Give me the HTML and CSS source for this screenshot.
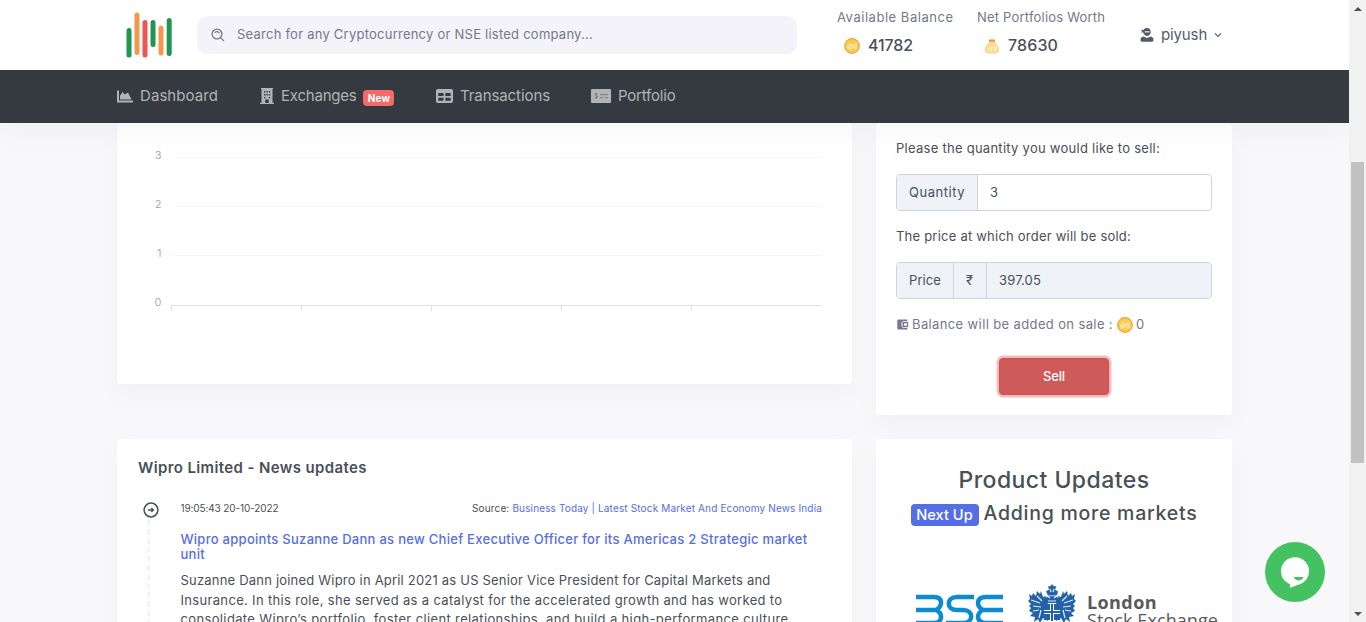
FILE: index.html
```html
<!DOCTYPE html>
<html lang="en">
<head>
<meta charset="utf-8">
<title>Wipro Limited</title>
<link rel="stylesheet" href="styles.css">
</head>
<body>
<svg class="defs" width="0" height="0">
  <symbol id="coin" viewBox="0 0 16 16">
    <circle cx="8" cy="8" r="7.4" fill="#f6cb51" stroke="#f0a63f" stroke-width="1.1"/>
    <path d="M3.9 7.5v3.7M5.5 5v6M7.1 6v5.3M8.9 6v3.6M10.6 6.6v4.4M12.2 5.4v5.6" stroke="#f8e6ae" stroke-width="1.2" stroke-linecap="round"/>
  </symbol>
</svg>
<div class="app">
  <div class="page">
    <header class="topbar">
      <div class="container topbar-row">
        <svg class="logo" viewBox="0 0 46 46" stroke-width="5" stroke-linecap="round">
          <path d="M3 18.5v24.5M43.2 8.500v33M27 10.5v22" stroke="#219653"/>
          <path d="M11 3v37.5M35 16v25" stroke="#f2994a"/>
          <path d="M19 10.5v32.5" stroke="#eb5757"/>
        </svg>
        <div class="search">
          <svg width="14" height="14" viewBox="0 0 14 14" fill="none" stroke="#74788d" stroke-width="1.3" stroke-linecap="round"><circle cx="6" cy="6" r="4.9"/><path d="M9.6 9.6l3 3M4.200 4.300a2.600 2.600 0 0 1 3.800.500"/></svg>
          <span class="t-search">Search for any Cryptocurrency or NSE listed company...</span>
        </div>
        <div class="stat stat-a">
          <span class="stat-label t-ab">Available Balance</span>
          <span class="stat-value"><svg width="16" height="16"><use href="#coin"/></svg><span class="t-v1">41782</span></span>
        </div>
        <div class="stat stat-b">
          <span class="stat-label t-np">Net Portfolios Worth</span>
          <span class="stat-value"><svg width="16" height="16" viewBox="0 0 16 16"><path d="M5.5 3.5h5c1 2 5 5 4.7 8.3-.2 2.5-1.7 3.7-3.7 3.7h-7c-2 0-3.5-1.2-3.7-3.700C.5 8.5 4.5 5.5 5.5 3.5z" fill="#fdd888"/><path d="M5 .7h6l-.8 1.800H5.800z" fill="#fbcf75"/><path d="M5 2.900h6" stroke="#c87137" stroke-width="1.2"/><path d="M4 9.500v4M5.700 7.500v6M7.400 8.500v5M9.200 7.500v4M10.800 8.800v4.500M12.300 8v5.500" stroke="#fdf0cf" stroke-width="1.1"/></svg><span class="t-v2">78630</span></span>
        </div>
        <div class="user">
          <svg width="14" height="14" viewBox="0 0 14 14" fill="#505d69"><path d="M3.400 2.100C4.200.6 5.500 0 7 0c2.200 0 3.700 1.600 3.700 3.900 0 2.300-1.600 4-3.700 4S3.400 6.200 3.200 4.300L1.200 4.700 2.100 3.200.9 1.700z"/><path d="M4.800 3.300h4.700v1.100H4.800z" fill="#fff"/><path d="M3.300 8.500L7 9.900l3.700-1.400c2 .4 2.800 1.800 2.800 3.600 0 1-.5 1.600-1.500 1.600H2c-1 0-1.500-.6-1.500-1.600 0-1.800.8-3.200 2.800-3.600z"/></svg>
          <span class="t-user">piyush</span>
          <svg class="chev" width="8" height="6" viewBox="0 0 8 6" fill="none" stroke="#555b6d" stroke-width="1.2"><path d="M1 1.300l3 3 3-3"/></svg>
        </div>
      </div>
    </header>
    <nav class="menu">
      <div class="container menu-row">
        <a class="menu-item m1"><svg width="16" height="13" viewBox="0 0 16 13" fill="#b0b3b7"><path d="M0 .5h2v10h14v2H0z"/><path d="M3 9.500V5.800L5.500 2l2.300 2.600L11 2.500 14.500 9.500z"/></svg><span class="t-m1">Dashboard</span></a>
        <a class="menu-item m2"><svg width="14" height="16" viewBox="0 0 14 16"><path d="M1 0h12v1h-.5v13.800H14V16H0v-1.200h1.500V1H1z" fill="#b0b3b7"/><path d="M4 3h1.400v1.400H4zm2.400 0h1.400v1.400H6.400zm2.400 0h1.400v1.400H8.800zM4 6h1.400v1.400H4zm2.400 0h1.400v1.400H6.400zm2.400 0h1.400v1.400H8.800zM4 9h1.400v1.200H4zm4.800 0h1.400v1.200H8.800zM5.300 15v-3.500h3.400V15z" fill="#343a40"/></svg><span class="t-m2">Exchanges</span><span class="badge-new"><span class="t-new">New</span></span></a>
        <a class="menu-item m3"><svg width="17" height="14" viewBox="0 0 17 14"><rect width="17" height="14" rx="2" fill="#b0b3b7"/><path d="M2.200 4h5.300v3H2.200zm7.200 0h5.300v3H9.400zM2.200 8.800h5.300v3H2.200zm7.200 0h5.300v3H9.400z" fill="#343a40"/></svg><span class="t-m3">Transactions</span></a>
        <a class="menu-item m4"><svg width="20" height="14" viewBox="0 0 20 14"><rect width="20" height="14" rx="1" fill="#b0b3b7"/><path d="M9 5.600h8M9 8.600h3M13.500 8.600H17M6.600 5.300c-.7-.9-2.600-.7-2.600.4 0 1.300 2.600.8 2.600 2.100 0 1.200-2 1.300-2.700.3M5.300 3.800v6" stroke="#74787d" stroke-width=".9" fill="none"/></svg><span class="t-m4">Portfolio</span></a>
      </div>
    </nav>
    <main class="content">
      <div class="container cards">
        <section class="card chart-card">
          <svg class="chart" width="735" height="261" viewBox="0 0 735 261">
            <path d="M54 34.500H705M54 83.500H705M54 132.500H705" stroke="#f7f7f7"/>
            <path d="M54 182.500H705M54.500 182v6M184.500 182v6M314.500 182v6M444.500 182v6M574.500 182v6" stroke="#e0e0e0" fill="none"/>
            <g class="axis"><text x="44.500" y="36">3</text><text x="44.500" y="85">2</text><text x="44.500" y="134">1</text><text x="44.500" y="183">0</text></g>
          </svg>
        </section>
        <section class="card sell-card">
          <p class="hint"><span class="t-q">Please the quantity you would like to sell:</span></p>
          <div class="group"><span class="addon a1"><span class="t-qty">Quantity</span></span><span class="field">3</span></div>
          <p class="hint"><span class="t-p">The price at which order will be sold:</span></p>
          <div class="group"><span class="addon a2"><span class="t-price">Price</span></span><span class="addon a3">₹</span><span class="field ro"><span class="t-pv">397.05</span></span></div>
          <p class="sale"><svg width="12" height="11" viewBox="0 0 12 11"><path d="M1.500.5h8.800v1.700H6.500q-2 0-2 2v2.600q0 2 2 2h3.800v1.700H1.500Q.3 10.500.3 9.300V1.700Q.3.5 1.500.5z" fill="#74788d"/><path d="M5.500 3h5.600v5H5.500z" fill="#74788d"/><path d="M7 4.300h3v2.400H7z" fill="#fff"/></svg><span class="t-sale">Balance will be added on sale :</span><svg width="16" height="16"><use href="#coin"/></svg><span>0</span></p>
          <button class="sell"><span class="t-sell">Sell</span></button>
        </section>
        <section class="card news-card">
          <h4 class="news-head"><span class="t-nh">Wipro Limited - News updates</span></h4>
          <div class="news-item">
            <div class="rail"><svg width="16" height="16" viewBox="0 0 16 16" fill="none" stroke="#495057" stroke-width="1.5"><circle cx="8" cy="8" r="6.9"/><path d="M5 8h5M8.300 6l2 2-2 2"/></svg><span class="dash"></span></div>
            <div class="news-body">
              <div class="meta"><span class="t-date">19:05:43 20-10-2022</span><span class="t-src">Source: <a>Business Today | Latest Stock Market And Economy News India</a></span></div>
              <h5 class="title"><span class="t-t1">Wipro appoints Suzanne Dann as new Chief Executive Officer for its Americas 2 Strategic market</span><br><span class="t-t2">unit</span></h5>
              <p class="copy"><span class="t-c1">Suzanne Dann joined Wipro in April 2021 as US Senior Vice President for Capital Markets and</span><br><span class="t-c2">Insurance. In this role, she served as a catalyst for the accelerated growth and has worked to</span><br><span class="t-c3">consolidate Wipro’s portfolio, foster client relationships, and build a high-performance culture</span></p>
            </div>
          </div>
        </section>
        <section class="card updates-card">
          <h3 class="pu"><span class="t-pu">Product Updates</span></h3>
          <h4 class="next"><span class="badge-next"><span class="t-next">Next Up</span></span><span class="t-add">Adding more markets</span></h4>
          <div class="markets">
            <svg width="88" height="38" viewBox="0 0 88 38" fill="none" stroke="#0a8bd2" stroke-width="4.500">
              <path d="M0 3H18C27 3 27 12 20 16 27 19 27 29 18 29H0M0 16H20"/>
              <path d="M58 3H41C30 3 30 16 41 16H47C58 16 58 29 47 29H30"/>
              <path d="M87 3H70C60 3 60 12 67 16 60 19 60 29 70 29H87M67 16H87"/>
            </svg>
            <svg width="48" height="48" viewBox="0 0 48 48" fill="#2462a8">
              <path d="M24 0l1.500 2 3 .5-1.500 3 3 2-1 4h-9l-2-4 3-2-1-3 2.500-.5z"/>
              <path d="M1 10l3 2 1-3 3 3 1-5 3 3 1-3 2 6 3-1-1 5 3 2-2 4v7l2 7-5-3-3 5-2-4-4 3 1-5-5-1 3-3-4-2 2-3-2-2 2-2-3-3 2-2zM47 10l-3 2-1-3-3 3-1-5-3 3-1-3-2 6-3-1 1 5-3 2 2 4v7l-2 7 5-3 3 5 2-4 4 3-1-5 5-1-3-3 4-2-2-3 2-2-2-2 3-3-2-2z"/>
              <path d="M17 14q7-4 14 0v5H17zM16 20h16v16H16z"/>
              <path d="M24 20v17M16 28h16" stroke="#fff" stroke-width="4"/><path d="M24 20v17M16 28h16" stroke="#2462a8" stroke-width="2"/>
              <path d="M3 16l9 3M5 22l8 1M5 27l6-1M9 12l5 5M45 16l-9 3M43 22l-8 1M43 27l-6-1M39 12l-5 5M18 11l4 3M30 11l-4 3M20 17h8M22 5l1 3M26 5l-1 3M13 26l-2 8M35 26l2 8" stroke="#dfeaf5" stroke-width="1.2"/>
            </svg>
            <div class="lse"><b class="t-lon">London</b><span class="t-se">Stock Exchange</span></div>
          </div>
        </section>
      </div>
    </main>
  </div>
  <div class="scroll"><span class="up"></span><span class="thumb"></span><span class="down"></span></div>
</div>
<div class="chat"><svg width="60" height="60" viewBox="0 0 60 60"><circle cx="30" cy="30" r="30" fill="#44c261"/><circle cx="30" cy="29.200" r="14" fill="#fff"/><path d="M25 41v4.700q12-3.500 17-9.500z" fill="#fff"/><path d="M28.700 35h10q-1.700 3.600-5 3.600t-5-3.600z" fill="#44c261"/></svg></div>
</body>
</html>
```

FILE: styles.css
```css
* { box-sizing: border-box; }
body { margin: 0; height: 622px; overflow: hidden; background: #f8f8fb; font: 13px/19.5px Inter, "Noto Sans", sans-serif; color: #495057; }
h3, h4, h5, p { margin: 0; font-weight: 400; }
span, b { white-space: nowrap; }
svg { flex: none; display: block; }
.defs { position: absolute; }
.app { display: grid; grid-template-columns: 1349px 17px; height: 622px; }
.page { display: flex; flex-direction: column; height: 622px; overflow: hidden; }
.container { width: 1115px; margin-left: 117px; }

/* Header */
.topbar { height: 70px; background: #fff; flex: none; }
.topbar-row { display: flex; height: 70px; padding-left: 9px; }
.logo { width: 46px; height: 46px; margin: 12px 25px 0 0; }
.search { width: 600px; height: 38px; margin-top: 16px; border-radius: 10px; background: #f3f3f9; display: flex; align-items: center; padding-left: 14px; gap: 12px; color: #74788d; }
.stat { display: flex; flex-direction: column; padding-top: 8px; color: #74788d; }
.stat-a { width: 140px; margin-left: 40px; }
.stat-b { width: 163px; }
.stat-value { display: flex; align-items: center; gap: 8px; margin: 8px 0 0 7px; font-size: 16px; font-weight: 500; color: #495057; }
.stat-value svg { margin-top: 2px; }
.user { display: flex; align-items: center; font-size: 15px; color: #555b6d; gap: 7px; }

/* Navigation */
.menu { height: 53px; flex: none; background: #343a40; position: relative; box-shadow: 0 12px 24px rgba(18, 38, 63, .03); }
.menu-row { display: flex; height: 53px; padding-bottom: 1px; }
.menu-item { display: flex; align-items: center; gap: 7px; font-size: 15px; color: #b0b3b7; }
.m1 { width: 143px; }
.m2 { width: 176px; }
.m3 { width: 155px; }
.badge-new { background: #f46a6a; color: #fff; font-size: 10px; font-weight: 700; line-height: 16px; height: 16px; width: 31px; text-align: center; border-radius: 4px; margin-top: 3px; }

/* Cards */
.content { flex: 1; overflow: hidden; }
.cards { display: grid; grid-template-columns: 735px 356px; column-gap: 24px; row-gap: 24px; align-items: start; }
.card { background: #fff; border-radius: 4px; box-shadow: 0 12px 24px rgba(18, 38, 63, .03); }
.chart-card { height: 261px; }
.axis { font-size: 11px; fill: #adb0b5; text-anchor: end; }
.sell-card { height: 292px; padding: 16px 20px 0; }
.hint { height: 19px; }
.group { display: flex; height: 37px; margin: 16px 0; border: 1px solid #ced4da; border-radius: 4px; overflow: hidden; }
.addon { display: flex; align-items: center; padding-left: 12px; background: #eff2f7; border-right: 1px solid #ced4da; }
.a1 { width: 81px; }
.a2 { width: 57px; }
.a3 { width: 33px; }
.field { flex: 1; display: flex; align-items: center; padding-left: 12px; }
.ro { background: #eff2f7; }
.sale { display: flex; align-items: center; height: 19px; padding-left: 1px; color: #74788d; gap: 4px; }
.sale svg { margin-right: -1px; }
.sell { display: block; width: 110px; height: 37px; margin: 24px 0 0 103px; padding: 0; border: 1px solid #c35555; border-radius: 4px; background: #cf5a5a; color: #fff; font: 500 13px/19px Inter, sans-serif; box-shadow: 0 0 0 2.4px #fab9b9; }

/* News */
.news-card { height: 300px; padding: 20px 30px 0 21px; }
.news-head { font-size: 15px; font-weight: 600; line-height: 18px; }
.news-item { display: flex; margin-top: 21px; }
.rail { width: 42.5px; padding: 4px 0 0 4.5px; }
.dash { display: block; width: 3px; height: 200px; margin: 2px 0 0 4.500px; background: repeating-linear-gradient(#f4f4f6 0 6px, #fff 6px 9px); }
.news-body { width: 642px; }
.meta { display: flex; justify-content: space-between; font-size: 10px; line-height: 20px; }
.meta a, .title { color: #556ee6; }
.title { margin-top: 14px; font-size: 13px; font-weight: 500; line-height: 15px; }
.copy { margin-top: 9px; line-height: 19.5px; }

/* Product updates */
.updates-card { height: 300px; padding-top: 28px; text-align: center; }
.pu { font-size: 23px; font-weight: 500; line-height: 26px; }
.next { display: flex; justify-content: center; gap: 5px; margin-top: 7px; font-size: 19.5px; line-height: 26px; font-weight: 500; }
.badge-next { width: 68px; height: 22px; margin-top: 4px; border-radius: 4px; background: #556ee6; color: #fff; font-size: 14.6px; line-height: 22px; }
.markets { display: flex; margin: 58px 0 0 40px; }
.markets svg:first-child { margin: 10px 24px 0 0; }
.lse { display: flex; flex-direction: column; margin: 9px 0 0 11px; text-align: left; font: 18px/18px "Open Sans", sans-serif; color: #58595b; }

/* Tracking */
.t-search { letter-spacing: .236px; }
.t-ab { letter-spacing: .53px; }
.t-np { letter-spacing: .2px; }
.t-v1, .t-user, .t-sell { letter-spacing: -.13px; }
.t-v2 { letter-spacing: .116px; }
.t-m1 { letter-spacing: .069px; }
.t-m2 { letter-spacing: -.22px; }
.t-m3 { letter-spacing: -.083px; }
.t-m4 { letter-spacing: -.2px; }
.t-new { letter-spacing: .2px; }
.t-q { letter-spacing: .267px; }
.t-qty { letter-spacing: .52px; }
.t-p { letter-spacing: .22px; }
.t-price { letter-spacing: .087px; }
.t-pv { letter-spacing: .151px; }
.t-sale { letter-spacing: .375px; }
.t-nh { letter-spacing: .382px; }
.t-date { letter-spacing: -.112px; }
.t-src { letter-spacing: .151px; }
.t-t1, .t-t2 { letter-spacing: .281px; }
.t-c1 { letter-spacing: .202px; }
.t-c2 { letter-spacing: .331px; }
.t-c3 { letter-spacing: .365px; }
.t-pu { letter-spacing: .439px; }
.t-add { letter-spacing: .749px; }
.t-lon { letter-spacing: .4px; }
.t-se { letter-spacing: .079px; }

/* Scrollbar and chat launcher */
.scroll { background: #f1f1f1; display: flex; flex-direction: column; align-items: center; padding: 7px 0 6px; }
.up { border: 4px solid transparent; border-top: 0; border-bottom-color: #505050; }
.thumb { width: 13px; height: 301px; margin-top: 151px; background: #c1c1c1; }
.down { margin-top: auto; border: 4px solid transparent; border-bottom: 0; border-top-color: #505050; }
.chat { position: fixed; left: 1265px; top: 542px; }
```
